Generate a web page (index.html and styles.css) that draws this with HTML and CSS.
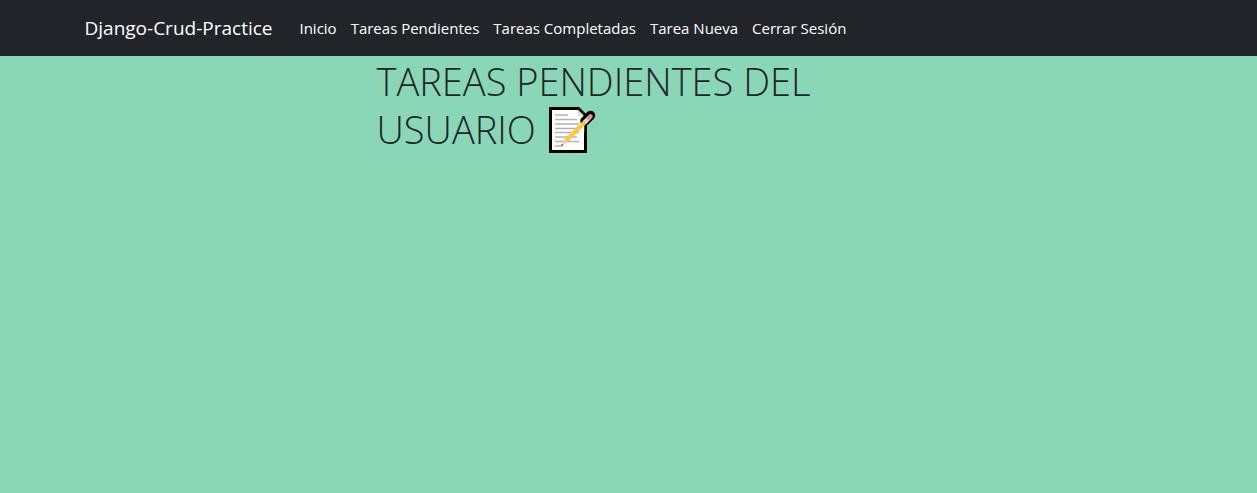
FILE: index.html
```html
<!DOCTYPE html>
<html lang="es">
<head>
<meta charset="utf-8">
<meta name="viewport" content="width=device-width, initial-scale=1">
<title>Django-Crud-Practice</title>
<link rel="stylesheet" href="styles.css">
</head>
<body>
<nav class="navbar">
  <div class="navbar-inner">
    <a class="brand" href="#">Django-Crud-Practice</a>
    <ul class="menu">
      <li><a class="menu-link" href="#">Inicio</a></li>
      <li><a class="menu-link" href="#">Tareas Pendientes</a></li>
      <li><a class="menu-link" href="#">Tareas Completadas</a></li>
      <li><a class="menu-link" href="#">Tarea Nueva</a></li>
      <li><a class="menu-link" href="#">Cerrar Sesión</a></li>
    </ul>
  </div>
</nav>
<main class="content">
  <h1 class="title">TAREAS PENDIENTES DEL USUARIO
    <svg class="memo" viewBox="0 0 48 48" fill="none" role="img" aria-label="Nota">
      <path d="M2.500 2.500H30.500L37.500 9.500V45.500H2.500Z" fill="#fff" stroke="#000" stroke-width="3"/>
      <path d="M30 4V10H36Z" fill="#e2e2e2"/>
      <path d="M37 15L42.500 9.500" stroke="#000" stroke-width="9.500" stroke-linecap="round"/>
      <path d="M35.500 17V26" stroke="#fff" stroke-width="1.500"/>
      <path d="M7 9H20M7 13.500H29M7 18H31M7 22.500H33M7 26.500H31M7 31H29M7 35.500H31M7 40H15" stroke="#b4b4b4" stroke-width="1.500"/>
      <path d="M17.500 35L38 15" stroke="#ffc83d" stroke-width="4.500"/>
      <path d="M16 33.300L19.200 36.500L13 40Z" fill="#f3d0c0"/>
      <path d="M13 40L13.900 37.800L15.300 38.800Z" fill="#444"/>
      <path d="M37 16L41 12" stroke="#d9d9d9" stroke-width="4.500"/>
      <path d="M41 12L42.500 10.500" stroke="#f0928a" stroke-width="4.500" stroke-linecap="round"/>
    </svg>
  </h1>
</main>
</body>
</html>
```
FILE: styles.css
```css
* { box-sizing: border-box; }

body {
  margin: 0;
  background: #8ad7b7;
  color: #212529;
  font-family: "Segoe UI", "Open Sans", sans-serif;
  font-size: 16px;
  line-height: 24px;
}

.navbar {
  background: #212529;
  padding: 8px 0;
}

.navbar-inner {
  display: flex;
  align-items: center;
  max-width: 1140px;
  margin: 0 auto;
  padding: 0 26px;
}

.brand {
  margin-right: 20px;
  padding: 5px 0;
  color: #fff;
  font-size: 19px;
  line-height: 30px;
  text-decoration: none;
  white-space: nowrap;
}

.menu {
  display: flex;
  margin: 0;
  padding: 0;
  list-style: none;
}

.menu-link {
  display: block;
  padding: 8px 7px;
  color: #fff;
  font-size: 15px;
  text-decoration: none;
  white-space: nowrap;
}

.content {
  max-width: 504px;
  margin: 0 auto;
}

.title {
  margin: 0 0 8px;
  padding-top: 1px;
  font-size: 38px;
  font-weight: 300;
  line-height: 48px;
}

.memo {
  width: 48px;
  height: 48px;
  margin: -4px 0 -4px 2px;
  vertical-align: -6px;
}
```
